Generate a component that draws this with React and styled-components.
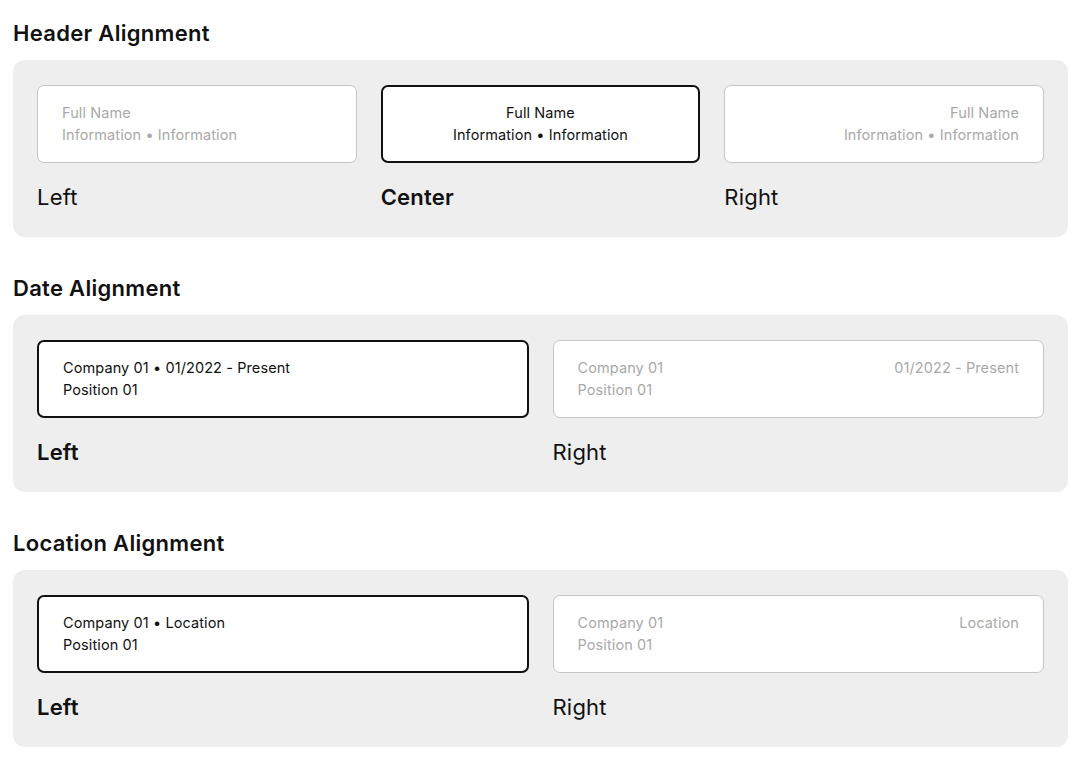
import React from 'react';
import styled, { createGlobalStyle } from 'styled-components';

const GlobalStyle = createGlobalStyle`
  body {
    margin: 0;
    background: #ffffff;
    font-family: 'Inter', 'Open Sans', sans-serif;
    color: #111111;
  }
`;

const sections = [
  {
    title: 'Header Alignment',
    columns: 3,
    options: [
      { label: 'Left', align: 'left', active: false, lines: [['Full Name'], ['Information • Information']] },
      { label: 'Center', align: 'center', active: true, lines: [['Full Name'], ['Information • Information']] },
      { label: 'Right', align: 'right', active: false, lines: [['Full Name'], ['Information • Information']] },
    ],
  },
  {
    title: 'Date Alignment',
    columns: 2,
    options: [
      { label: 'Left', align: 'left', active: true, lines: [['Company 01 • 01/2022 - Present'], ['Position 01']] },
      { label: 'Right', align: 'left', active: false, lines: [['Company 01', '01/2022 - Present'], ['Position 01']] },
    ],
  },
  {
    title: 'Location Alignment',
    columns: 2,
    options: [
      { label: 'Left', align: 'left', active: true, lines: [['Company 01 • Location'], ['Position 01']] },
      { label: 'Right', align: 'left', active: false, lines: [['Company 01', 'Location'], ['Position 01']] },
    ],
  },
];

const App = () => {
  return (
    <Page>
      <GlobalStyle />
      {sections.map((section) => (
        <Section key={section.title}>
          <Title>{section.title}</Title>
          <Panel $columns={section.columns}>
            {section.options.map((opt) => (
              <Option key={opt.label}>
                <Card $active={opt.active} $align={opt.align}>
                  {opt.lines.map((line, i) => (
                    <Line key={i}>
                      {line.map((part) => (
                        <span key={part}>{part}</span>
                      ))}
                    </Line>
                  ))}
                </Card>
                <Label $active={opt.active}>{opt.label}</Label>
              </Option>
            ))}
          </Panel>
        </Section>
      ))}
    </Page>
  );
};

export default App;

const Page = styled.div`
  width: 1055px;
  padding: 18px 0 20px 13px;
  display: flex;
  flex-direction: column;
  gap: 36px;
`;

const Section = styled.section`
  display: flex;
  flex-direction: column;
  gap: 12px;
`;

const Title = styled.h2`
  margin: 0;
  font-size: 22px;
  line-height: 30px;
  font-weight: 600;
  letter-spacing: 0.3px;
`;

const Panel = styled.div`
  display: grid;
  grid-template-columns: repeat(${(p) => p.$columns}, 1fr);
  gap: 24px;
  padding: 25px 24px 25px 24px;
  background: #eeeeee;
  border-radius: 12px;
`;

const Option = styled.div`
  display: flex;
  flex-direction: column;
  gap: 19px;
`;

const Card = styled.div`
  box-sizing: border-box;
  height: 78px;
  display: flex;
  flex-direction: column;
  justify-content: center;
  padding: 0 24px 1px;
  background: #ffffff;
  border-radius: 7px;
  border: ${(p) => (p.$active ? '2px solid #111111' : '1px solid #c6c6c6')};
  color: ${(p) => (p.$active ? '#111111' : '#a9a9a9')};
  text-align: ${(p) => p.$align};
  font-size: 14.5px;
  line-height: 22px;
  letter-spacing: 0.1px;
`;

const Line = styled.div`
  display: flex;
  justify-content: space-between;
  span:only-child {
    flex: 1;
  }
`;

const Label = styled.div`
  font-size: 22px;
  line-height: 30px;
  letter-spacing: 0.2px;
  font-weight: ${(p) => (p.$active ? 600 : 400)};
`;
